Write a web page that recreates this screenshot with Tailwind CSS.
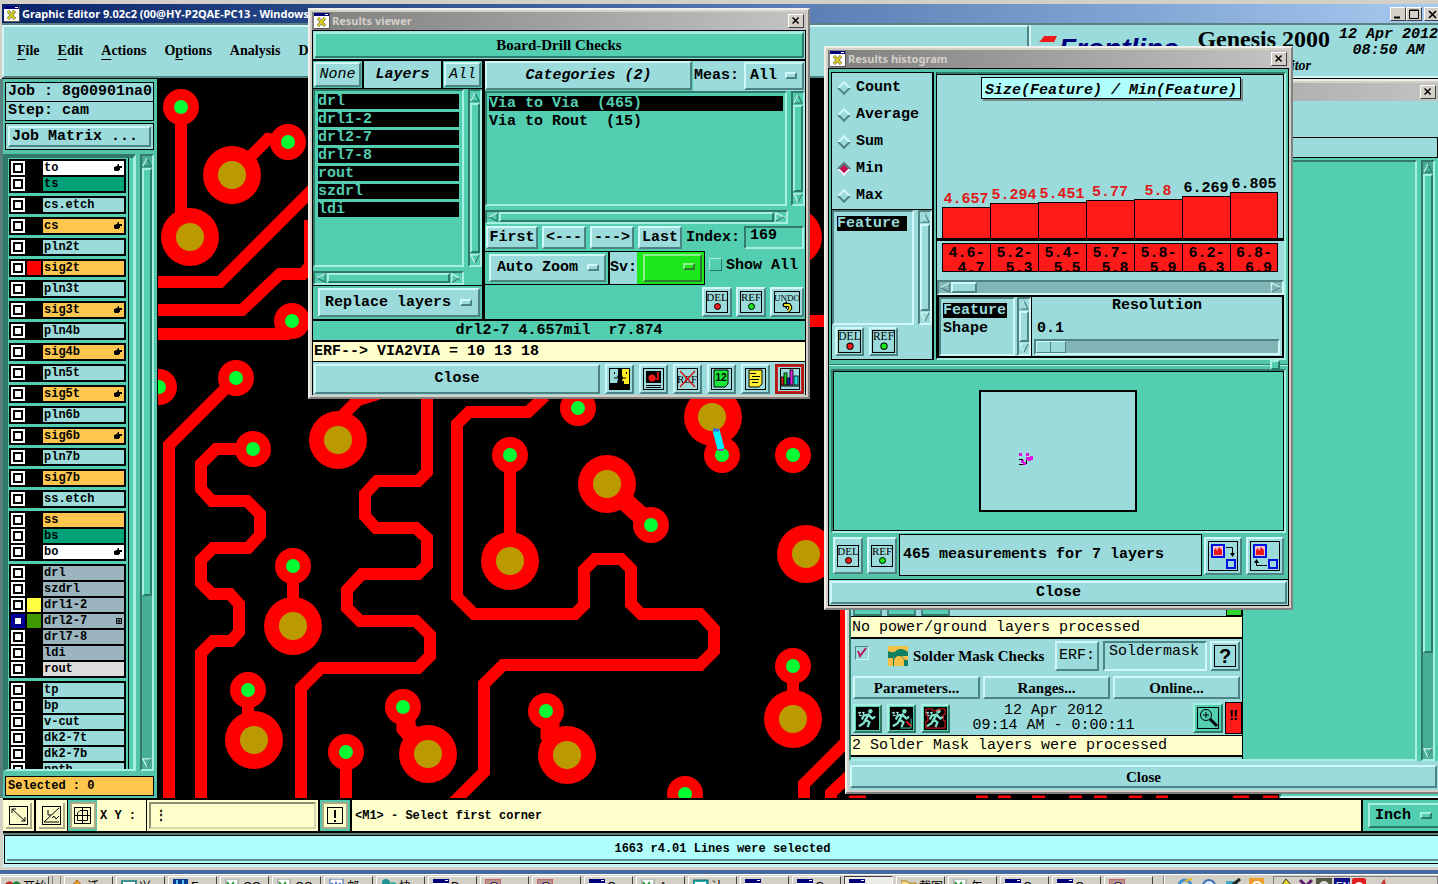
<!DOCTYPE html>
<html lang="en">
<head>
<meta charset="utf-8">
<title>Graphic Editor 9.02c2</title>
<script src="https://cdn.jsdelivr.net/npm/@tailwindcss/browser@4"></script>
</head>
<body class="bg-[#3a6ea5] text-black font-['Liberation_Mono',monospace] font-bold text-[15px] leading-[18px]">
<svg class="hidden" aria-hidden="true">
  <symbol id="up" viewBox="0 0 12 12"><path d="M6 1 L1 11 H11 Z" fill="none" stroke="currentColor" stroke-width="1.5"/><path d="M6 1 L1 11" stroke="#c8f6ee" stroke-width="1.5"/></symbol>
  <symbol id="down" viewBox="0 0 12 12"><path d="M6 11 L1 1 H11 Z" fill="none" stroke="#c8f6ee" stroke-width="1.5"/><path d="M6 11 L11 1" stroke="currentColor" stroke-width="1.5"/></symbol>
  <symbol id="left" viewBox="0 0 12 12"><path d="M1 6 L11 1 V11 Z" fill="none" stroke="currentColor" stroke-width="1.5"/><path d="M1 6 L11 1" stroke="#c8f6ee" stroke-width="1.5"/></symbol>
  <symbol id="right" viewBox="0 0 12 12"><path d="M11 6 L1 1 V11 Z" fill="none" stroke="#c8f6ee" stroke-width="1.5"/><path d="M11 6 L1 11" stroke="currentColor" stroke-width="1.5"/></symbol>
  <symbol id="x11" viewBox="0 0 16 16"><rect width="16" height="16" fill="#555"/><rect width="15" height="15" fill="#fff"/><rect width="15" height="3" fill="#00007b"/><rect x="11" y="1" width="3" height="1" fill="#fff"/><path d="M4 5 L11 13 M11 5 L4 13" stroke="#555" stroke-width="3"/><path d="M4 5 L11 13 M11 5 L4 13" stroke="#d8cc20" stroke-width="2"/></symbol>
  <symbol id="cross" viewBox="0 0 16 14"><path d="M4 3 L11 10 M11 3 L4 10" stroke="#000" stroke-width="1.7"/></symbol>
  <symbol id="del" viewBox="0 0 22 22"><rect x=".5" y=".5" width="21" height="21" fill="none" stroke="#000"/><text x="11" y="10" font-family="Liberation Serif" font-weight="400" font-size="11" text-anchor="middle">DEL</text><circle cx="11.500" cy="15.500" r="3" fill="#f01818" stroke="#000"/></symbol>
  <symbol id="ref" viewBox="0 0 22 22"><rect x=".5" y=".5" width="21" height="21" fill="none" stroke="#000"/><text x="11" y="10" font-family="Liberation Serif" font-weight="400" font-size="11" text-anchor="middle">REF</text><circle cx="11.500" cy="15.500" r="3" fill="#18e818" stroke="#000"/></symbol>
  <symbol id="hand" viewBox="0 0 8 8"><path d="M0 3 L3 2 L4 0 H5 V2 H8 V4 H6 V5 H6 V6 H5 V7 H1 L0 6 Z"/></symbol>
  <symbol id="run" viewBox="0 0 24 24"><circle cx="15" cy="4.500" r="2.300"/><path d="M14 7 L10 13 L14 16 L12 21 M10 13 L8 17 L3 20 M13 8 L8 9 L6 13 M14 9 L17 12 L20 10" stroke="currentColor" stroke-width="2.400" fill="none"/><path d="M2 6 h3 M6 6 h3 M3 9 h3 M4 5 v3 M8 5 v3" stroke="#bff" stroke-width="1"/></symbol>
</svg>

<main class="relative h-screen w-full overflow-hidden flex flex-col bg-[#d4d0c8]">
  <!-- main window title -->
  <header class="mt-1 mx-[2px] mr-0 h-[19px] shrink-0 flex items-center justify-between bg-linear-to-r from-[#0a246a] to-[#a6caf0]">
    <h1 class="flex items-center gap-[2px] pl-[2px] font-['Noto_Sans',sans-serif] font-bold text-[11px] text-white whitespace-nowrap"><svg class="size-4"><use href="#x11"/></svg>Graphic Editor 9.02c2 (00@HY-P2QAE-PC13 - Windows)</h1>
    <div class="flex">
      <button aria-label="Minimize" class="w-4 h-[14px] bg-[#d4d0c8] border border-t-white border-l-white border-b-[#404040] border-r-[#404040]"><svg viewBox="0 0 14 12" class="w-full h-full"><path d="M3 9.500 h6" stroke="#000" stroke-width="2"/></svg></button>
      <button aria-label="Maximize" class="w-4 h-[14px] mr-[2px] bg-[#d4d0c8] border border-t-white border-l-white border-b-[#404040] border-r-[#404040]"><svg viewBox="0 0 14 12" class="w-full h-full"><path d="M2.500 2 h9 v8.500 h-9 z M2 2.500 h10" fill="none" stroke="#000"/></svg></button>
      <button aria-label="Close" class="w-[14px] h-[14px] bg-[#d4d0c8] border border-r-0 border-t-white border-l-white border-b-[#404040]"><svg class="w-4 h-[14px]"><use href="#cross"/></svg></button>
    </div>
  </header>

  <!-- menu bar and product panel -->
  <div class="ml-[2px] h-[56px] shrink-0 border-t-2 border-[#5a8080] border-b border-b-black flex bg-[#9bdbdb]">
    <nav class="flex-1 border-2 border-t-[#d5f5f5] border-l-[#d5f5f5] border-b-[#4e8383] border-r-[#4e8383] flex items-center gap-[18px] pl-[13px] pb-[2px] font-['Liberation_Serif',serif] font-bold text-[14px]">
      <a href="#"><u class="underline-offset-4">F</u>ile</a><a href="#"><u class="underline-offset-4">E</u>dit</a><a href="#"><u class="underline-offset-4">A</u>ctions</a><a href="#">O<u class="underline-offset-4">p</u>tions</a><a href="#">Analysis</a><a href="#">DFM</a>
    </nav>
    <section class="w-[409px] border-l-2 border-[#d5f5f5] border-b-2 flex pl-[8px] overflow-hidden">
      <div class="flex pt-[10px] font-['Liberation_Sans',sans-serif] font-bold italic text-[28px] leading-[28px] text-[#00007c] w-[159px]"><svg class="w-5 h-6 shrink-0" viewBox="0 0 20 24"><path d="M5 1 H18 L15 7 H0 L3 4 Z" fill="#f01818"/></svg>Frontline</div>
      <div class="w-[142px]">
        <div class="pt-[2px] font-['Liberation_Serif',serif] font-bold text-[24px] leading-[24px] whitespace-nowrap">Genesis 2000</div>
        <div class="pr-7 text-right font-['Liberation_Serif',serif] font-bold italic text-[14px] leading-[30px]">Graphic Editor</div>
      </div>
      <div class="whitespace-nowrap pt-[2px] text-center font-bold italic text-[15px] leading-[16px]">12 Apr 2012<br>08:50 AM</div>
    </section>
  </div>

  <!-- work area -->
  <div class="flex-1 min-h-0 flex border-l-3 border-[#5a8080]">
    <aside class="w-[154px] shrink-0 bg-[#54c4aa] flex flex-col pt-[3px] px-[2px] pr-[3px]">
      <div class="h-5 border border-black bg-[#9bdbdb] px-[2px] whitespace-nowrap overflow-hidden">Job : 8g00901na0</div>
      <div class="h-[19px] border border-t-0 border-black bg-[#9bdbdb] px-[2px]">Step: cam</div>
      <div class="mt-[2px] h-[27px] border border-black bg-[#9bdbdb] p-[2px]"><button class="w-full h-full text-left pl-[2px] leading-[16px] border-2 border-t-[#d0f8f8] border-l-[#d0f8f8] border-b-[#4e8383] border-r-[#4e8383]">Job Matrix ...</button></div>
      <div class="mt-1 flex-1 min-h-0 flex justify-between -ml-[2px]">
        <div class="w-[133px] border-t-4 border-l-[5px] border-r-3 border-b-2 border-t-[#317a68] border-l-[#317a68] border-r-[#a5f0e0] border-b-[#a5f0e0] bg-[#54ceb0] overflow-hidden">
          <div id="layers" class="w-[121px] pl-[1px] pt-[1px] pr-[2px] border-r border-black flex flex-col gap-[3px] font-bold text-[12px] leading-[14px]"></div>
        </div>
        <div data-sb="v" data-rest="161" class="w-[14px] text-[#2a7c6a]"></div>
      </div>
      <div class="mt-[5px] mb-[2px] h-5 border border-black bg-[#fdc64e] px-[2px] font-bold text-[12px] leading-[18px]">Selected : 0</div>
    </aside>
    <div class="flex-1 min-w-0 bg-black border-l border-black overflow-hidden">
      <svg width="1121" height="720" viewBox="158 79 1121 720" fill="none" stroke="#f00" stroke-width="12" role="img" aria-label="Board layout">
        <path d="M181 107V225 M232 175L268 139L288 142 M158 282H220L330 172 M158 310H242L280 274H303L310 266V220 M158 334H286L292 321 M236 378L169 445V800 M253 449H216L201 464V489L212 501H247L260 514V535L248 548H213L201 560V583L212 594H230L239 604V632L231 641H213L201 653V800 M338 420L358 400L378 394"/>
        <path d="M427 390V472L418 481H377L365 494V516L376 528H416L427 538V565L418 574H362L347 590V608L360 621H416L430 635V656L418 668H321L301 688V800 M545 396L528 412H469L457 424V597L474 614H575L584 605V570L595 559H621L631 569V604L641 614H700L714 629V651L700 665H503L484 684V772L454 802"/>
        <path d="M293 566V626 M248 690V730 M346 752V800 M510 455V561 M793 666V719 M700 321H830 M846 600V750 M850 738L804 784V800 M850 775L831 793V800"/>
        <path d="M406 712V728L428 754 M550 715L550 735L567 755 M607 485L651 525" stroke-width="19"/>
        <path d="M849 799h17M976 799h12M998 799h13M1032 799h13M1069 799h13M1094 799h13M1129 799h13M1156 799h12M1233 799h16M1263 799h15" stroke-width="7"/>
        <g fill="#f00" stroke="none">
          <circle cx="181" cy="107" r="18"/><circle cx="288" cy="142" r="18"/><circle cx="292" cy="321" r="18"/><circle cx="159" cy="387" r="18"/><circle cx="236" cy="378" r="18"/><circle cx="253" cy="449" r="18"/><circle cx="293" cy="566" r="18"/><circle cx="248" cy="690" r="18"/><circle cx="346" cy="752" r="18"/><circle cx="403" cy="707" r="18"/><circle cx="510" cy="455" r="18"/><circle cx="578" cy="408" r="18"/><circle cx="722" cy="455" r="18"/><circle cx="793" cy="455" r="18"/><circle cx="651" cy="525" r="18"/><circle cx="793" cy="666" r="18"/><circle cx="546" cy="711" r="18"/><circle cx="685" cy="794" r="18"/>
          <circle cx="190" cy="237" r="29"/><circle cx="232" cy="175" r="29"/><circle cx="338" cy="440" r="29"/><circle cx="293" cy="626" r="29"/><circle cx="254" cy="740" r="29"/><circle cx="428" cy="754" r="29"/><circle cx="510" cy="561" r="29"/><circle cx="607" cy="484" r="29"/><circle cx="713" cy="417" r="29"/><circle cx="806" cy="554" r="29"/><circle cx="793" cy="719" r="29"/><circle cx="567" cy="755" r="29"/><circle cx="793" cy="237" r="29"/>
        </g>
        <g fill="#00ff33" stroke="none">
          <circle cx="181" cy="107" r="7"/><circle cx="288" cy="142" r="7"/><circle cx="292" cy="321" r="7"/><circle cx="159" cy="387" r="7"/><circle cx="236" cy="378" r="7"/><circle cx="253" cy="449" r="7"/><circle cx="293" cy="566" r="7"/><circle cx="248" cy="690" r="7"/><circle cx="346" cy="752" r="7"/><circle cx="403" cy="707" r="7"/><circle cx="510" cy="455" r="7"/><circle cx="578" cy="408" r="7"/><circle cx="722" cy="455" r="7"/><circle cx="793" cy="455" r="7"/><circle cx="651" cy="525" r="7"/><circle cx="793" cy="666" r="7"/><circle cx="546" cy="711" r="7"/><circle cx="685" cy="794" r="7"/>
        </g>
        <g fill="#bb9900" stroke="none">
          <circle cx="190" cy="237" r="14"/><circle cx="232" cy="175" r="14"/><circle cx="338" cy="440" r="14"/><circle cx="293" cy="626" r="14"/><circle cx="254" cy="740" r="14"/><circle cx="428" cy="754" r="14"/><circle cx="510" cy="561" r="14"/><circle cx="607" cy="484" r="14"/><circle cx="712" cy="417" r="14"/><circle cx="806" cy="554" r="14"/><circle cx="793" cy="719" r="14"/><circle cx="567" cy="755" r="14"/>
        </g>
        <path d="M716 430L721 449" stroke="#00f0ff" stroke-width="7"/><path d="M713 430h6" stroke="#3070e0" stroke-width="3"/><path d="M718 450h6" stroke="#a040c0" stroke-width="2"/>
      </svg>
    </div>
    <div class="w-[159px] shrink-0 bg-[#54ceb0] border-l-2 border-b-2 border-l-[#317a68] border-b-[#d0f8f8]"></div>
  </div>

  <!-- command line -->
  <div class="ml-[3px] h-[35px] shrink-0 border-y-2 border-black bg-black flex gap-[2px]">
    <button aria-label="Window zoom" class="w-[31px] bg-[#ffffcc] p-[1px]"><svg viewBox="0 0 29 29" class="w-full h-full" fill="none" stroke="#000"><path d="M2 27V2H27" stroke="#fff"/><path d="M27 2V27H2" stroke="#aaa988" stroke-width="2"/><rect x="5.500" y="5.500" width="18" height="18"/><path d="M8 8L21 20M8 12V8H12M21 16V20H17"/></svg></button>
    <button aria-label="Angle" class="w-[31px] bg-[#ffffcc] p-[1px]"><svg viewBox="0 0 29 29" class="w-full h-full" fill="none" stroke="#000"><path d="M2 27V2H27" stroke="#fff"/><path d="M27 2V27H2" stroke="#aaa988" stroke-width="2"/><rect x="5.500" y="5.500" width="18" height="18"/><path d="M22 7L7 21H22M11 9V14H14M15 17l2-2 2 3 3-3"/></svg></button>
    <button aria-label="Grid" class="w-[29px] -ml-[1px] bg-[#54c4aa] p-[1px]"><svg viewBox="0 0 27 29" class="w-full h-full" fill="none" stroke="#000"><rect x="2" y="2" width="24" height="25" fill="#ffffcc" stroke="#aaa988" stroke-width="2"/><rect x="5.500" y="6.500" width="16" height="16"/><path d="M8.500 19.500V12L11 9.500H18.500V19.500ZM6 14.500H21M13.500 7V22"/></svg></button>
    <label for="xy" class="w-[49px] -ml-[2px] bg-[#ffffcc] flex items-center pl-[3px] font-bold text-[12px] whitespace-nowrap">X Y :</label>
    <div class="w-[171px] -ml-[1px] bg-[#ffffcc] p-[2px]"><input id="xy" class="w-full h-full px-1 bg-[#ffffcc] border-2 border-t-[#8d8d70] border-l-[#8d8d70] border-b-[#d8d8b0] border-r-[#d8d8b0] text-[12px]" value="&#8942;"></div>
    <button aria-label="Alert" class="w-[30px] bg-[#54c4aa] p-[2px]"><svg viewBox="0 0 26 27" class="w-full h-full" fill="none" stroke="#000"><rect x="1" y="1" width="24" height="25" fill="#ffffcc" stroke="#aaa988" stroke-width="2"/><rect x="5.500" y="5.500" width="15" height="16"/><path d="M13 8V16M13 18V20" stroke-width="2"/></svg></button>
    <div class="flex-1 bg-[#ffffcc] flex items-center pl-[3px] font-bold text-[12px]">&lt;M1&gt; - Select first corner</div>
    <label class="relative w-[75px] bg-[#54ceb0] pl-[5px] py-[3px]"><select aria-label="Units" class="appearance-none w-full h-full pl-[5px] border-2 border-r-0 border-t-[#a5f0e0] border-l-[#a5f0e0] border-b-[#2a7c6a] bg-[#54ceb0]"><option>Inch</option></select><span class="absolute right-[6px] top-[12px] w-3 h-[7px] border-2 border-t-[#a5f0e0] border-l-[#a5f0e0] border-b-[#2a7c6a] border-r-[#2a7c6a]"></span></label>
  </div>
  <div class="ml-[3px] h-[34px] shrink-0 border-t-2 border-[#5a8080] bg-[#c8f4f4] px-[1px] pr-0"><div class="h-[29px] border border-r-0 border-black bg-[#b0fffc] p-[2px] pr-0"><p class="h-full border-b-2 border-[#5a9090] flex items-center justify-center font-bold text-[12px]">1663 r4.01 Lines were selected</p></div></div>
  <div class="h-[3px] shrink-0 bg-[#d4d0c8]"></div>
  <div class="h-1 shrink-0 bg-[#44699c]"></div>
  <footer class="h-[10px] shrink-0 overflow-hidden bg-[#d4d0c8] border-t border-white flex pt-[1px] font-['Liberation_Sans','Noto_Sans_CJK_SC',sans-serif] font-normal text-[12px] leading-[16px]">
    <div id="tasks" class="flex gap-[3px]"></div>
    <div class="ml-[10px] w-[2px] h-5 shrink-0 border-l border-[#808080] bg-white"></div>
    <div class="flex gap-2 pl-3 pt-[2px] shrink-0">
      <svg class="size-4" viewBox="0 0 16 16"><circle cx="8" cy="8" r="6" fill="none" stroke="#3a8fd0" stroke-width="3"/><path d="M8 3L15 1" stroke="#e8b820" stroke-width="2"/></svg>
      <svg class="size-4" viewBox="0 0 16 16"><circle cx="8" cy="8" r="6" fill="#d8e8f8" stroke="#3a6fb0" stroke-width="2"/></svg>
      <svg class="size-4" viewBox="0 0 16 16"><path d="M1 3H13V16H1Z" fill="#40a8c0"/><path d="M5 9L15 1" stroke="#222" stroke-width="3"/></svg>
      <svg class="size-4" viewBox="0 0 16 16"><rect width="15" height="15" fill="#f0a030"/><circle cx="8" cy="8" r="4" fill="none" stroke="#fff" stroke-width="2"/></svg>
    </div>
    <div class="ml-[8px] flex-1 h-5 border border-[#808080] flex gap-[2px] pl-[6px] pt-[1px]">
      <svg class="size-4" viewBox="0 0 16 16"><path d="M6 1L12 8H1Z" fill="#e8d820" stroke="#333"/></svg>
      <svg class="size-4" viewBox="0 0 16 16"><path d="M2 2L14 14M14 2L2 14" stroke="#602070" stroke-width="3"/></svg>
      <svg class="size-4" viewBox="0 0 16 16"><rect width="16" height="16" fill="#555840"/><circle cx="8" cy="8" r="5" fill="#ddd"/></svg>
      <svg class="size-4" viewBox="0 0 16 16"><rect width="16" height="16" fill="#101088"/><text x="2" y="12" font-size="10" fill="#fff">EN</text></svg>
      <svg class="size-4" viewBox="0 0 16 16"><rect width="14" height="16" rx="2" fill="#e02020"/><circle cx="7" cy="8" r="4" fill="#fff"/></svg>
      <svg class="size-4 ml-2" viewBox="0 0 16 16"><path d="M2 10L6 3L8 10" stroke="#d03030" fill="none" stroke-width="2"/></svg>
    </div>
  </footer>

  <!-- checklist window -->
  <section class="absolute left-[845px] right-0 top-[79px] h-[715px] border-2 border-r-0 border-t-[#f0eeea] border-l-[#f0eeea] border-b-[#808080] bg-[#d4d0c8] p-[2px] pr-0 flex flex-col font-normal">
    <div class="h-[18px] shrink-0 flex items-center justify-end pr-[2px] bg-linear-to-r from-[#808080] to-[#c2c2c2]"><button aria-label="Close checklist" class="w-4 h-[14px] bg-[#d4d0c8] border border-t-white border-l-white border-b-[#404040] border-r-[#404040]"><svg class="w-full h-full"><use href="#cross"/></svg></button></div>
    <div class="h-[36px] shrink-0 bg-[#9bdbdb]"></div>
    <div class="h-[21px] shrink-0 bg-[#9bdbdb] border border-black"></div>
    <div class="flex-1 min-h-0 bg-[#54ceb0] flex gap-1 pt-[2px] pr-[3px]">
      <div class="flex-1 min-h-0 border-2 border-t-[#317a68] border-l-[#317a68] border-b-[#a5f0e0] border-r-[#a5f0e0] flex">
        <div class="w-[392px] border-r border-black flex flex-col justify-end pb-[2px] bg-[#9bdbdb]">
          <div class="h-8 flex justify-between items-end pl-[2px]"><div class="flex gap-[5px]"><button aria-label="Run" class="w-[29px] h-8 bg-[#54ceb0] border-2 border-b-[#317a68] border-[#4e8383]"></button><button aria-label="Run area" class="w-[29px] h-8 bg-[#54ceb0] border-2 border-b-[#317a68] border-[#4e8383]"></button><button aria-label="Run profile" class="w-[29px] h-8 bg-[#54ceb0] border-2 border-b-[#317a68] border-[#4e8383]"></button></div><div class="w-4 h-8 bg-[#2bd82b] border border-black"></div></div>
          <div class="border-t border-b-2 border-black bg-[#ffffcc] h-[23px] pl-[1px] leading-[21px]">No power/ground layers processed</div>
          <div class="flex items-start h-[37px] px-[2px] pt-[2px]">
            <input type="checkbox" id="smc" checked class="absolute opacity-0"><label for="smc" class="size-[14px] mt-[5px] ml-[2px] border border-t-[#4e8383] border-l-[#4e8383] border-b-[#d0f8f8] border-r-[#d0f8f8]"><svg viewBox="0 0 12 12" class="size-3"><path d="M2 4L4 9L10 1" stroke="#c01060" stroke-width="2" fill="none"/></svg></label>
            <svg class="ml-[19px] mt-[5px] w-5 h-5 shrink-0" viewBox="0 0 20 20"><rect width="20" height="20" fill="#108060"/><path d="M0 0H20V6Q14 1 9 4Q6 8 0 5ZM0 12H5V20H0ZM6 15a5 5 0 0 1 10 0v5H6Z" fill="#f4c048"/><path d="M14 10h6v4h-3z" fill="#f4c048"/></svg>
            <label for="smc" class="ml-[5px] leading-[30px] font-['Liberation_Serif',serif] font-bold whitespace-nowrap">Solder Mask Checks</label>
            <button class="ml-auto w-[44px] h-[30px] border-2 border-t-[#d0f8f8] border-l-[#d0f8f8] border-b-[#4e8383] border-r-[#4e8383]">ERF:</button>
            <input aria-label="ERF" value="Soldermask" class="ml-1 w-[104px] h-[30px] pl-1 pb-[10px] border-2 border-b-[#d0f8f8] border-r-[#d0f8f8] border-t-[#4e8383] border-l-[#4e8383]">
            <button aria-label="Help" class="ml-[3px] w-[30px] h-[30px] p-[2px] border-2 border-t-[#d0f8f8] border-l-[#d0f8f8] border-b-[#4e8383] border-r-[#4e8383]"><span class="block h-full border border-black font-['Liberation_Sans',sans-serif] font-bold text-[20px] leading-5">?</span></button>
          </div>
          <div class="flex gap-[3px] px-[2px] h-[23px] font-['Liberation_Serif',serif] font-bold"><button class="flex-1 border-2 border-t-[#d0f8f8] border-l-[#d0f8f8] border-b-[#4e8383] border-r-[#4e8383]">Parameters...</button><button class="flex-1 border-2 border-t-[#d0f8f8] border-l-[#d0f8f8] border-b-[#4e8383] border-r-[#4e8383]">Ranges...</button><button class="flex-1 border-2 border-t-[#d0f8f8] border-l-[#d0f8f8] border-b-[#4e8383] border-r-[#4e8383]">Online...</button></div>
          <div class="flex items-center gap-[5px] pl-[2px] h-9 pt-[2px]">
            <button aria-label="Run check" class="size-[29px] p-[1px] bg-[#54ceb0] border-2 border-t-[#a5f0e0] border-l-[#a5f0e0] border-b-[#317a68] border-r-[#317a68]"><svg class="w-full h-full bg-black text-[#7fe0cc]" fill="currentColor"><use href="#run"/></svg></button>
            <button aria-label="Run check in area" class="size-[29px] p-[1px] bg-[#54ceb0] border-2 border-t-[#a5f0e0] border-l-[#a5f0e0] border-b-[#317a68] border-r-[#317a68]"><svg viewBox="0 0 24 24" class="w-full h-full bg-black text-[#7fe0cc]" fill="currentColor"><use href="#run"/><path d="M11 22H22V12" fill="none" stroke="#54ceb0"/><path d="M17 15l5 5" stroke="#f02020" stroke-width="2"/></svg></button>
            <button aria-label="Run check in profile" class="size-[29px] p-[1px] bg-[#54ceb0] border-2 border-t-[#a5f0e0] border-l-[#a5f0e0] border-b-[#317a68] border-r-[#317a68]"><svg viewBox="0 0 24 24" class="w-full h-full bg-black text-[#7fe0cc]" fill="currentColor"><use href="#run"/><path d="M2 2H9V4H15V2H22V8H20V14H22V22H2V15H4V9H2Z" fill="none" stroke="#f02020"/></svg></button>
            <div class="flex-1 text-center leading-[15px] pr-9">12 Apr 2012<br>09:14 AM - 0:00:11</div>
            <div class="flex gap-[2px]"><button aria-label="View results" class="w-[30px] h-[30px] mt-[1px] p-[2px] bg-[#54ceb0] border-2 border-t-[#a5f0e0] border-l-[#a5f0e0] border-b-[#317a68] border-r-[#317a68]"><svg viewBox="0 0 22 22" class="w-full h-full" fill="none" stroke="#000"><rect x=".5" y=".5" width="21" height="21"/><circle cx="9" cy="8" r="5.500"/><path d="M6 8H12M9 5V11"/><path d="M13 12L20 19" stroke-width="3"/></svg></button><div class="w-[17px] h-8 bg-[#ff1a1a] border border-black text-center font-bold text-[15px] leading-[28px]">&#8252;</div></div>
          </div>
          <div class="border-t border-b-2 border-black bg-[#ffffcc] h-[22px] pl-[1px] leading-5">2 Solder Mask layers were processed</div>
        </div>
      </div>
      <div data-sb="v" data-rest="94" class="w-[14px] text-[#2a7c6a]"></div>
    </div>
    <div class="h-[29px] shrink-0 bg-[#9bdbdb] p-[1px] pt-[4px]"><button class="w-full h-[23px] font-['Liberation_Serif',serif] font-bold border-2 border-t-[#d0f8f8] border-l-[#d0f8f8] border-b-[#4e8383] border-r-[#4e8383]">Close</button></div>
  </section>

  <!-- results viewer -->
  <section class="absolute left-[308px] top-[8px] w-[502px] h-[391px] border-2 border-t-[#f0eeea] border-l-[#f0eeea] border-b-[#808080] border-r-[#808080] bg-[#d4d0c8] p-[2px] flex flex-col">
    <div class="h-[18px] shrink-0 flex items-center justify-between px-[2px] bg-linear-to-r from-[#808080] to-[#c4c4c4]"><h2 class="flex items-center gap-[2px] font-['Noto_Sans',sans-serif] font-bold text-[11px] text-[#d4d0c8]"><svg class="size-4"><use href="#x11"/></svg>Results viewer</h2><button aria-label="Close results viewer" class="w-4 h-[14px] bg-[#d4d0c8] border border-t-white border-l-white border-b-[#404040] border-r-[#404040]"><svg class="w-full h-full"><use href="#cross"/></svg></button></div>
    <div class="flex-1 bg-black border border-b-0 border-black flex flex-col">
      <div class="h-7 mb-[2px] bg-[#9bdbdb] p-[1px]"><button class="w-full h-full bg-[#54ceb0] font-['Liberation_Serif',serif] font-bold border-2 border-t-[#a5f0e0] border-l-[#a5f0e0] border-b-[#2a7c6a] border-r-[#2a7c6a] leading-5">Board-Drill Checks</button></div>
      <div class="h-[258px] flex gap-[3px]">
        <div class="w-[169px] shrink-0 flex flex-col gap-[1px]">
          <div class="h-[27px] flex gap-[2px] italic">
            <div class="w-[49px] bg-[#54c4aa] p-[1px]"><button class="w-full h-full italic font-normal bg-[#9bdbdb] border-2 border-t-[#d0f8f8] border-l-[#d0f8f8] border-b-[#4e8383] border-r-[#4e8383]">None</button></div>
            <div class="flex-1 bg-[#9bdbdb] text-center leading-[27px]">Layers</div>
            <div class="w-[39px] bg-[#54c4aa] p-[1px]"><button class="w-full h-full italic font-normal bg-[#9bdbdb] border-2 border-t-[#d0f8f8] border-l-[#d0f8f8] border-b-[#4e8383] border-r-[#4e8383]">All</button></div>
          </div>
          <div class="h-[196px] bg-[#54ceb0] flex flex-col gap-1">
            <div class="h-[178px] flex gap-1">
              <ul class="flex-1 flex flex-col gap-[3px] pt-[3px] px-[3px] border-2 border-t-[#317a68] border-l-[#317a68] border-b-[#a5f0e0] border-r-[#a5f0e0] leading-[15px] text-[#54ceb0]"><li class="bg-black">drl</li><li class="bg-black">drl1-2</li><li class="bg-black">drl2-7</li><li class="bg-black">drl7-8</li><li class="bg-black">rout</li><li class="bg-black">szdrl</li><li class="bg-black">ldi</li></ul>
              <div data-sb="v" class="w-[14px] text-[#2a7c6a]"></div>
            </div>
            <div data-sb="h" class="w-[151px] h-[14px] text-[#2a7c6a]"></div>
          </div>
          <label class="relative h-[33px] bg-[#54c4aa] pl-[5px] pt-[2px] pr-[2px]"><select aria-label="Layer mode" class="appearance-none w-full h-[29px] pl-[5px] bg-[#9bdbdb] border-2 border-t-[#d0f8f8] border-l-[#d0f8f8] border-b-[#4e8383] border-r-[#4e8383]"><option>Replace layers</option></select><span class="absolute right-[10px] top-[13px] w-3 h-[7px] border-2 border-t-[#d0f8f8] border-l-[#d0f8f8] border-b-[#4e8383] border-r-[#4e8383]"></span></label>
        </div>
        <div class="flex-1 min-w-0 bg-[#54ceb0] flex flex-col">
          <div class="h-[30px] flex">
            <button class="w-[207px] shrink-0 h-[29px] mr-[1px] italic bg-[#9bdbdb] border-2 border-t-[#d0f8f8] border-l-[#d0f8f8] border-b-[#4e8383] border-r-[#4e8383]">Categories (2)</button>
            <label class="relative flex-1 bg-[#9bdbdb] flex items-center justify-between pl-[1px] pr-[1px]">Meas:<select class="appearance-none w-[60px] h-[28px] pl-[4px] bg-[#9bdbdb] border-2 border-t-[#d0f8f8] border-l-[#d0f8f8] border-b-[#4e8383] border-r-[#4e8383]"><option>All</option></select><span class="absolute right-[8px] top-[11px] w-3 h-[7px] border-2 border-t-[#d0f8f8] border-l-[#d0f8f8] border-b-[#4e8383] border-r-[#4e8383]"></span></label>
          </div>
          <div class="h-[115px] flex gap-1">
            <ul class="flex-1 flex flex-col gap-[3px] pt-[3px] px-[2px] border-2 border-t-[#317a68] border-l-[#317a68] border-b-[#a5f0e0] border-r-[#a5f0e0] leading-[15px] whitespace-pre"><li class="bg-black text-[#54ceb0]">Via to Via  (465)</li><li>Via to Rout  (15)</li></ul>
            <div data-sb="v" class="w-[14px] text-[#2a7c6a]"></div>
          </div>
          <div data-sb="h" class="mt-1 w-[303px] h-[14px] text-[#2a7c6a]"></div>
          <div class="h-[27px] pt-[2px] px-[1px] flex gap-1 items-start">
            <button class="w-[52px] h-[23px] bg-[#9bdbdb] border-2 border-t-[#d0f8f8] border-l-[#d0f8f8] border-b-[#4e8383] border-r-[#4e8383]">First</button>
            <button class="w-[44px] h-[23px] bg-[#9bdbdb] border-2 border-t-[#d0f8f8] border-l-[#d0f8f8] border-b-[#4e8383] border-r-[#4e8383]">&lt;---</button>
            <button class="w-[44px] h-[23px] bg-[#9bdbdb] border-2 border-t-[#d0f8f8] border-l-[#d0f8f8] border-b-[#4e8383] border-r-[#4e8383]">---&gt;</button>
            <button class="w-[44px] h-[23px] bg-[#9bdbdb] border-2 border-t-[#d0f8f8] border-l-[#d0f8f8] border-b-[#4e8383] border-r-[#4e8383]">Last</button>
            <label for="idx" class="leading-[23px]">Index:</label>
            <input id="idx" value="169" class="flex-1 min-w-0 h-[23px] pl-1 pb-1 border-2 border-b-[#a5f0e0] border-r-[#a5f0e0] border-t-[#317a68] border-l-[#317a68]">
          </div>
          <div class="h-[34px] flex">
            <label class="relative w-[123px] border-t border-b border-black p-[2px] pl-1"><select aria-label="Zoom mode" class="appearance-none w-full h-[28px] pl-[6px] bg-[#9bdbdb] border-2 border-t-[#d0f8f8] border-l-[#d0f8f8] border-b-[#4e8383] border-r-[#4e8383]"><option>Auto Zoom</option></select><span class="absolute right-[9px] top-[12px] w-3 h-[7px] border-2 border-t-[#d0f8f8] border-l-[#d0f8f8] border-b-[#4e8383] border-r-[#4e8383]"></span></label>
            <label class="relative w-[97px] border border-l-2 border-black bg-[#9bdbdb] flex items-center">Sv:<span class="ml-auto w-[67px] h-full bg-[#1ce81c] p-[2px] pl-[6px]"><select class="appearance-none w-full h-full border-2 border-t-[#90f090] border-l-[#90f090] border-b-[#2f7a2f] border-r-[#2f7a2f]"><option></option></select></span><span class="absolute right-[9px] top-[11px] w-3 h-[7px] border-2 border-t-[#90f090] border-l-[#90f090] border-b-[#2f7a2f] border-r-[#2f7a2f]"></span></label>
            <label class="flex gap-1 pl-1 pt-[6px] whitespace-nowrap"><input type="checkbox" class="appearance-none mt-[1px] size-[13px] border border-t-[#a5f0e0] border-l-[#a5f0e0] border-b-[#2a7c6a] border-r-[#2a7c6a]">Show All</label>
          </div>
          <div class="flex justify-end gap-1 pt-[2px] pr-[1px]">
            <button aria-label="Delete" class="size-[30px] p-[2px] bg-[#9bdbdb] border-2 border-t-[#d0f8f8] border-l-[#d0f8f8] border-b-[#4e8383] border-r-[#4e8383]"><svg class="w-full h-full"><use href="#del"/></svg></button>
            <button aria-label="Reference" class="size-[30px] p-[2px] bg-[#9bdbdb] border-2 border-t-[#d0f8f8] border-l-[#d0f8f8] border-b-[#4e8383] border-r-[#4e8383]"><svg class="w-full h-full"><use href="#ref"/></svg></button>
            <button aria-label="Undo" class="w-[34px] h-[30px] p-[2px] bg-[#9bdbdb] border-2 border-t-[#d0f8f8] border-l-[#d0f8f8] border-b-[#4e8383] border-r-[#4e8383]"><svg class="w-full h-full" viewBox="0 0 26 22"><rect x=".5" y=".5" width="25" height="21" fill="none" stroke="#000"/><text x="13" y="10" font-family="Liberation Serif" font-weight="400" font-size="9" text-anchor="middle">UNDO</text><path d="M9 14H15Q18 17 14 20" fill="none" stroke="#000" stroke-width="4"/><path d="M13 10L8 14L13 18Z" fill="#000"/><path d="M10 14H15Q18 17 14 20" fill="none" stroke="#e8e020" stroke-width="2"/></svg></button>
          </div>
        </div>
      </div>
      <div class="h-[19px] my-[2px] bg-[#54ceb0] text-center leading-5 whitespace-pre">drl2-7 4.657mil  r7.874</div>
      <div class="h-[19px] mb-[1px] bg-[#ffffcc] pl-[1px] leading-5">ERF--&gt; VIA2VIA = 10 13 18</div>
      <div class="flex-1 bg-[#9bdbdb] flex items-center gap-[5px] px-[1px]">
        <button class="flex-1 h-[30px] border-2 border-t-[#d0f8f8] border-l-[#d0f8f8] border-b-[#4e8383] border-r-[#4e8383]">Close</button>
        <button aria-label="Compare" class="w-[29px] h-[30px] p-[1px] border-2 border-t-[#d0f8f8] border-l-[#d0f8f8] border-b-[#4e8383] border-r-[#4e8383]"><svg viewBox="0 0 23 24" class="w-full h-full"><rect x="1" y="1" width="21" height="22" fill="#000"/><path d="M2 2H10V8L9 10L10 12L9 16H2Z" fill="#9bdbdb"/><path d="M14 2H21V17H16V14H14L15 11L14 8Z" fill="#ffee20"/><path d="M6.500 5v2M6 11h3M18.500 5v2M18 11h-3" stroke="#000"/></svg></button>
        <button aria-label="Snapshot" class="w-[29px] h-[30px] p-[1px] border-2 border-t-[#d0f8f8] border-l-[#d0f8f8] border-b-[#4e8383] border-r-[#4e8383]"><svg viewBox="0 0 23 24" class="w-full h-full"><rect x="1.500" y="1.500" width="20" height="21" fill="none" stroke="#000"/><rect x="4" y="4" width="15" height="12"/><path d="M16 5V12H12" stroke="#d01010" stroke-width="2" fill="none"/><circle cx="10" cy="11" r="3.500" fill="#f01818"/><path d="M4 18.500H19M4 20.500H19"  stroke="#000"/></svg></button>
        <button aria-label="Clear reference" class="w-[29px] h-[30px] p-[1px] border-2 border-t-[#d0f8f8] border-l-[#d0f8f8] border-b-[#4e8383] border-r-[#4e8383]"><svg viewBox="0 0 23 24" class="w-full h-full"><rect x="1.500" y="1.500" width="20" height="21" fill="none" stroke="#000"/><text x="11" y="16" font-family="Liberation Serif" font-weight="400" font-size="11" text-anchor="middle">REF</text><path d="M4 4L19 20M19 4L4 20" stroke="#d01818" stroke-width="1.500"/></svg></button>
        <button aria-label="Counts" class="w-[29px] h-[30px] p-[1px] border-2 border-t-[#d0f8f8] border-l-[#d0f8f8] border-b-[#4e8383] border-r-[#4e8383]"><svg viewBox="0 0 23 24" class="w-full h-full"><rect x="1.500" y="1.500" width="20" height="21" fill="none" stroke="#000"/><path d="M4 3H18V17L15 20H4Z" fill="#18e838" stroke="#000"/><text x="11" y="14" font-family="Liberation Sans" font-weight="bold" font-size="10" text-anchor="middle">12</text></svg></button>
        <button aria-label="Report" class="w-[29px] h-[30px] p-[1px] border-2 border-t-[#d0f8f8] border-l-[#d0f8f8] border-b-[#4e8383] border-r-[#4e8383]"><svg viewBox="0 0 23 24" class="w-full h-full"><rect x="1.500" y="1.500" width="20" height="21" fill="none" stroke="#000"/><path d="M5 3H18V17L15 20H5Z" fill="#ffee30" stroke="#000"/><path d="M6 6.500h6M8 9.500h8M6 12.500h9M8 15.500h6" stroke="#000"/></svg></button>
        <button aria-label="Histogram" class="w-[29px] h-[30px] border-2 border-[#b01818]"><svg viewBox="0 0 25 26" class="w-full h-full"><rect x=".5" y=".5" width="24" height="25" fill="#9bdbdb" stroke="#d02020"/><rect x="3.500" y="2.500" width="19" height="21" fill="none" stroke="#000"/><g stroke="#000" stroke-width=".8"><rect x="4" y="11" width="3" height="8" fill="#e02020"/><rect x="7" y="7" width="3" height="12" fill="#20d020"/><rect x="10" y="12" width="3" height="7" fill="#2020c0"/><rect x="13" y="4" width="3" height="15" fill="#e020e0"/><rect x="17" y="10" width="4" height="9" fill="#20e0e0"/></g><path d="M4 20H22" stroke="#000"/></svg></button>
      </div>
    </div>
  </section>

  <!-- results histogram -->
  <section class="absolute left-[824px] top-[46px] w-[469px] h-[564px] border-2 border-t-[#f0eeea] border-l-[#f0eeea] border-b-[#808080] border-r-[#808080] bg-[#d4d0c8] p-[2px] flex flex-col">
    <div class="h-[18px] shrink-0 flex items-center justify-between px-[2px] bg-linear-to-r from-[#808080] to-[#c4c4c4]"><h2 class="flex items-center gap-[2px] font-['Noto_Sans',sans-serif] font-bold text-[11px] text-[#d4d0c8]"><svg class="size-4"><use href="#x11"/></svg>Results histogram</h2><button aria-label="Close histogram window" class="w-4 h-[14px] bg-[#d4d0c8] border border-t-white border-l-white border-b-[#404040] border-r-[#404040]"><svg class="w-full h-full"><use href="#cross"/></svg></button></div>
    <div class="flex-1 border border-black bg-[#54c4aa] flex flex-col">
      <div class="mt-[3px] mx-[2px] h-[288px] flex gap-[2px]">
        <div class="w-[103px] border border-r-2 border-black bg-[#9bdbdb] flex flex-col">
          <div id="stats" class="h-[137px] border-b border-black pl-[7px] pt-[1px]"></div>
          <div class="h-[115px] flex gap-1"><ul class="flex-1 pt-[4px] pl-[3px] pr-[5px] border-2 border-t-[#4e8383] border-l-[#4e8383] border-b-[#d0f8f8] border-r-[#d0f8f8] leading-[15px]"><li class="bg-black text-[#9bdbdb]">Feature</li></ul><div data-sb="v" class="w-[14px] text-[#4e8383]"></div></div>
          <div class="flex gap-[5px] pl-[3px] pt-[2px]"><button aria-label="Delete bin" class="size-[29px] p-[1px] border-2 border-t-[#d0f8f8] border-l-[#d0f8f8] border-b-[#4e8383] border-r-[#4e8383]"><svg class="w-full h-full"><use href="#del"/></svg></button><button aria-label="Reference bin" class="size-[29px] p-[1px] border-2 border-t-[#d0f8f8] border-l-[#d0f8f8] border-b-[#4e8383] border-r-[#4e8383]"><svg class="w-full h-full"><use href="#ref"/></svg></button></div>
        </div>
        <div class="flex-1 border-t-2 border-[#317a68] border-b-2 border-b-[#a5f0e0] border-r-2 border-r-[#a5f0e0] border-l border-l-black bg-[#9bdbdb] flex flex-col">
          <div class="relative h-[167px] border-b-[3px] border-r border-t border-black pl-[5px]">
            <div class="absolute left-[44px] top-[2px] h-[22px] px-[3px] border border-black bg-[#b0fffc] shadow-[2px_2px_0_#78898a] italic leading-[26px] whitespace-nowrap">Size(Feature) / Min(Feature)</div>
            <div id="bars" class="h-full flex items-end"></div>
          </div>
          <div id="bins" class="mt-[2px] ml-[5px] h-[37px] flex items-start"></div>
          <div data-sb="h" data-rest="293" class="w-full h-[15px] text-[#4e8383]"></div>
          <div class="flex-1 border-2 border-black flex">
            <ul class="w-[76px] pt-[4px] pl-[2px] pr-[6px] border-2 border-t-[#4e8383] border-l-[#4e8383] border-b-[#d0f8f8] border-r-[#d0f8f8] leading-[15px] flex flex-col gap-[3px]"><li class="bg-black text-[#9bdbdb]">Feature</li><li>Shape</li></ul>
            <div data-sb="v" class="w-[14px] ml-[2px] text-[#4e8383]"></div>
            <div class="flex-1 border-l border-black pl-[2px] pr-[2px] flex flex-col">
              <label for="res" class="text-center leading-[18px]">Resolution</label>
              <output for="res" class="mt-[4px] pl-[3px] leading-5">0.1</output>
              <input id="res" type="range" min="0" max="10" value="0" class="w-full h-4 appearance-none bg-[#82b5b5] border-2 border-t-[#4e8383] border-l-[#4e8383] border-b-[#d0f8f8] border-r-[#d0f8f8] [&::-webkit-slider-thumb]:appearance-none [&::-webkit-slider-thumb]:w-[30px] [&::-webkit-slider-thumb]:h-3 [&::-webkit-slider-thumb]:border [&::-webkit-slider-thumb]:border-t-[#d0f8f8] [&::-webkit-slider-thumb]:border-l-[#d0f8f8] [&::-webkit-slider-thumb]:border-b-[#4e8383] [&::-webkit-slider-thumb]:border-r-[#4e8383] [&::-webkit-slider-thumb]:bg-[linear-gradient(90deg,#9bdbdb_13px,#4e8383_13px,#4e8383_14px,#9bdbdb_14px)]">
            </div>
          </div>
        </div>
      </div>
      <div class="h-[9px] flex items-center relative"><div class="w-full border-t border-b border-t-[#2a7c6a] border-b-[#a5f0e0]"></div><div class="absolute right-[8px] top-0 size-[10px] bg-[#54ceb0] border-2 border-t-[#a5f0e0] border-l-[#a5f0e0] border-b-[#2a7c6a] border-r-[#2a7c6a]"></div></div>
      <div class="h-[164px] mx-[2px] border-2 border-t-[#317a68] border-l-[#317a68] border-b-[#a5f0e0] border-r-[#a5f0e0]"><div class="h-full border border-black bg-[#54ceb0] flex justify-center pt-[18px] pr-[2px]">
        <svg class="w-[158px] h-[122px] bg-[#9bdbdb] border-2 border-black" viewBox="0 0 154 118" shape-rendering="crispEdges"><path d="M38 61h3v3h-3zM45 61h3v3h-3zM45 65h7v3h-7zM49 64h3v4h-3zM40 68h3v3h-3zM42 70h3v3h-3zM47 67h3v2h-3z" fill="#e010e0"/><path d="M38 67.500h4M38 72.500h4M45.500 68v4" stroke="#000" fill="none"/></svg>
      </div></div>
      <div class="h-[46px] px-1 flex items-start gap-1 pt-[1px]">
        <button aria-label="Delete measure" class="mt-[3px] w-[30px] h-[37px] px-[2px] bg-[#9bdbdb] border-2 border-t-[#d0f8f8] border-l-[#d0f8f8] border-b-[#4e8383] border-r-[#4e8383]"><svg class="w-full h-[22px]"><use href="#del"/></svg></button>
        <button aria-label="Reference measure" class="mt-[3px] w-[30px] h-[37px] px-[2px] bg-[#9bdbdb] border-2 border-t-[#d0f8f8] border-l-[#d0f8f8] border-b-[#4e8383] border-r-[#4e8383]"><svg class="w-full h-[22px]"><use href="#ref"/></svg></button>
        <div class="flex-1 h-[42px] -ml-[2px] -mr-[2px] pl-[3px] border border-black bg-[#9bdbdb] leading-[40px]">465 measurements for 7 layers</div>
        <button aria-label="Next area" class="mt-[3px] w-[38px] h-[38px] p-[2px] bg-[#9bdbdb] border-2 border-t-[#d0f8f8] border-l-[#d0f8f8] border-b-[#4e8383] border-r-[#4e8383]"><svg viewBox="0 0 30 30" class="w-full h-full" fill="none"><rect x=".5" y=".5" width="29" height="29" stroke="#000"/><rect x="4" y="4" width="12" height="12" fill="#f8c0c8" stroke="#0010e0" stroke-width="2"/><path d="M6 9L8 7L9 10L11 6L14 9V14H6Z" fill="#e81818"/><rect x="19" y="19" width="8" height="8" stroke="#0010e0" stroke-width="2"/><path d="M18 6.500H24.500V14" stroke="#000"/><path d="M22 12H27L24.500 16Z" fill="#000"/></svg></button>
        <button aria-label="Previous area" class="mt-[3px] w-[38px] h-[38px] p-[2px] bg-[#9bdbdb] border-2 border-t-[#d0f8f8] border-l-[#d0f8f8] border-b-[#4e8383] border-r-[#4e8383]"><svg viewBox="0 0 30 30" class="w-full h-full" fill="none"><rect x=".5" y=".5" width="29" height="29" stroke="#000"/><rect x="4" y="4" width="12" height="12" fill="#f8c0c8" stroke="#0010e0" stroke-width="2"/><path d="M6 9L8 7L9 10L11 6L14 9V14H6Z" fill="#e81818"/><rect x="19" y="19" width="8" height="8" stroke="#0010e0" stroke-width="2"/><path d="M17 24.500H6.500V22" stroke="#000"/><path d="M4 22H9L6.500 18Z" fill="#000"/></svg></button>
      </div>
      <div class="h-[26px] border-t border-black bg-[#9bdbdb] p-[1px]"><button class="w-full h-[23px] border-2 border-t-[#d0f8f8] border-l-[#d0f8f8] border-b-[#4e8383] border-r-[#4e8383]">Close</button></div>
    </div>
  </section>
</main>

<script>
const $ = id => document.getElementById(id);

// Layer matrix, one array per board group: [name, background, marker, swatch]
const C = 'bg-[#9bdbdb]', O = 'bg-[#fdc64e]', G = 'bg-[#9bb4be]', W = 'bg-white', T = 'bg-[#00a27a]';
const groups = [
  [['to',W,'h'],['ts',T]], [['cs.etch',C]], [['cs',O,'h']], [['pln2t',C]], [['sig2t',O,'','bg-[#ff0000]']], [['pln3t',C]], [['sig3t',O,'h']],
  [['pln4b',C]], [['sig4b',O,'h']], [['pln5t',C]], [['sig5t',O,'h']], [['pln6b',C]], [['sig6b',O,'h']], [['pln7b',C]], [['sig7b',O]], [['ss.etch',C]],
  [['ss',O],['bs',T],['bo',W,'h']],
  [['drl',G],['szdrl',G],['drl1-2',G,'','bg-[#ffff40]'],['drl2-7',G,'g','bg-[#409800]'],['drl7-8',G],['ldi',G],['rout','bg-[#dcdcdc]']],
  [['tp',C],['bp',C],['v-cut',C],['dk2-7t',C],['dk2-7b',C],['npth',C]]
];
$('layers').innerHTML = groups.map(g => `<div class="bg-black py-[1px]">` + g.map(([n, bg, m, sw]) =>
  `<label class="h-4 px-[2px] flex items-center gap-[2px]"><input type="checkbox" class="appearance-none size-[14px] border-2 bg-white ${m === 'g' ? 'border-[#0000a8] shadow-[inset_0_0_0_2px_#000080]' : 'border-white shadow-[inset_0_0_0_2px_#000]'}"><span class="size-[14px] ${sw || 'bg-black'}"></span><span class="flex-1 h-[14px] pl-[1px] pr-[2px] flex items-center justify-between ${bg}">${n}${m === 'h' ? '<svg class="size-2"><use href="#hand"/></svg>' : m === 'g' ? '<svg class="size-[6px]" viewBox="0 0 6 6"><path d="M.5 .5h5v5h-5zM3 0v6M0 3h6" fill="none" stroke="#000"/></svg>' : ''}</span></label>`
).join('') + '</div>').join('');

// Statistic choices
$('stats').innerHTML = ['Count','Average','Sum','Min','Max'].map(s =>
  `<label class="h-[27px] flex items-center gap-[7px]"><input type="radio" name="stat" ${s === 'Min' ? 'checked' : ''} class="appearance-none size-[10px] rotate-45 border-2 border-t-[#d0f8f8] border-l-[#d0f8f8] border-b-[#4e8383] border-r-[#4e8383] checked:bg-[#c01050] checked:border-t-[#4e8383] checked:border-l-[#4e8383] checked:border-b-[#e8ffff] checked:border-r-[#e8ffff]">${s}</label>`).join('');

// Histogram
const data = [['4.657',31,'4.6-','4.7',1],['5.294',35,'5.2-','5.3',1],['5.451',36,'5.4-','5.5',1],['5.77',38,'5.7-','5.8',1],['5.8',39,'5.8-','5.9',1],['6.269',42,'6.2-','6.3',0],['6.805',46,'6.8-','6.9',0]];
$('bars').innerHTML = data.map(([v, h,,, red], i) =>
  `<div class="w-12 text-center leading-[15px] ${red ? 'text-[#e01818]' : ''}">${v}<div class="bg-[#ff1a1a] border-t border-l border-black ${i === 6 ? 'border-r' : ''}" style="height:${h}px"></div></div>`).join('');
$('bins').innerHTML = data.map(([,, a, b], i) =>
  `<div class="w-12 h-[29px] bg-[#ff1a1a] border ${i === 6 ? '' : 'border-r-0'} border-black text-center leading-[15px] pt-[2px]">${a}<br>&nbsp;${b}</div>`).join('');

// Scroll bars; data-rest is the empty track length after the thumb
document.querySelectorAll('[data-sb]').forEach(e => {
  const v = e.dataset.sb === 'v', teal = e.className.includes('4e8383');
  const track = e.dataset.rest ? (teal ? 'bg-[#82b5b5]' : 'bg-[#48ae98]') : '';
  const frame = teal ? 'border-t-[#4e8383] border-l-[#4e8383] border-b-[#d0f8f8] border-r-[#d0f8f8]' : 'border-t-[#317a68] border-l-[#317a68] border-b-[#a5f0e0] border-r-[#a5f0e0]';
  const thumb = teal ? 'bg-[#9bdbdb] border-t-[#d0f8f8] border-l-[#d0f8f8] border-b-[#4e8383] border-r-[#4e8383]' : 'bg-[#54ceb0] border-t-[#a5f0e0] border-l-[#a5f0e0] border-b-[#2a7c6a] border-r-[#2a7c6a]';
  const rest = `<div class="shrink-0" style="${v ? 'height' : 'width'}:${e.dataset.rest || 0}px"></div>`;
  e.innerHTML = `<div class="w-full h-full flex border-2 ${v ? 'flex-col' : ''} ${frame} ${track}"><svg class="shrink-0 ${v ? 'w-full h-3' : 'h-full w-3'}"><use href="${v ? '#up' : '#left'}"/></svg><div class="flex-1 border-2 ${thumb}"></div>${rest}<svg class="shrink-0 ${v ? 'w-full h-3' : 'h-full w-3'}"><use href="${v ? '#down' : '#right'}"/></svg></div>`;
});

// Taskbar
const xl = '<rect x="1" width="12" height="14" fill="#fff" stroke="#888"/><path d="M2 3L9 12M9 3L2 12" stroke="#2a9a3a" stroke-width="2"/>';
const win = '<rect width="16" height="14" fill="#fff"/><rect width="16" height="4" fill="#00007b"/><rect x="12" y="1" width="3" height="1" fill="#fff"/>';
const globe = '<rect width="16" height="16" fill="#b89090" stroke="#d04040"/><circle cx="9" cy="8" r="5" fill="#202080"/><path d="M7 4h4v3h-3z" fill="#e0d040"/>';
const tasks = [['<path d="M0 5Q4 0 8 4V16H0Z" fill="#c03020"/><path d="M8 4Q12 0 16 5V16H8Z" fill="#208030"/>','开始'],null,
 ['<path d="M2 8L8 1L14 8Z" fill="#f0a020" stroke="#a06010"/>','活'],['<rect x="1" y="2" width="14" height="12" fill="#fff" stroke="#409090" stroke-width="2"/>','兴'],['<rect width="15" height="15" fill="#0a3a90"/><path d="M4 1V15M10 1V15" stroke="#60c0f0" stroke-width="2"/>','F..'],[xl,'CC'],[xl,'CC'],
 ['<rect x="1" width="13" height="14" fill="#fff" stroke="#3060b0"/><path d="M3 4L5 12L7 5L9 12L11 4" stroke="#3060b0" fill="none" stroke-width="2"/>','邮'],['<circle cx="5" cy="4" r="4" fill="#209090"/><circle cx="12" cy="7" r="4" fill="#30b0a0"/>','快'],[win,'D.'],[globe,''],[globe,''],[win,'C.'],[xl,'A.'],['<rect y="1" width="15" height="14" fill="#20b0b0" stroke="#106060"/><rect x="2" y="3" width="11" height="3" fill="#fff"/>','计'],[win,'..'],[win,'G.'],[win,'',1],
 ['<path d="M0 2H6L8 4H15V15H0Z" fill="#f8e080" stroke="#a08020"/>','截图'],[xl,'午'],[win,'C.'],[win,'G.'],[globe,'']];
$('tasks').innerHTML = tasks.map(t => t ? `<button class="w-[49px] h-5 shrink-0 flex gap-[2px] pl-1 pt-[2px] overflow-hidden whitespace-nowrap border ${t[2] ? 'bg-[#ecebe6] border-t-[#404040] border-l-[#404040] border-b-white border-r-white' : 'border-t-white border-l-white border-b-[#404040] border-r-[#404040]'}"><svg class="size-4 shrink-0" viewBox="0 0 16 16">${t[0]}</svg>${t[1]}</button>` : '<span class="w-[9px] border-x border-[#808080]"></span>').join('');
</script>
</body>
</html>
